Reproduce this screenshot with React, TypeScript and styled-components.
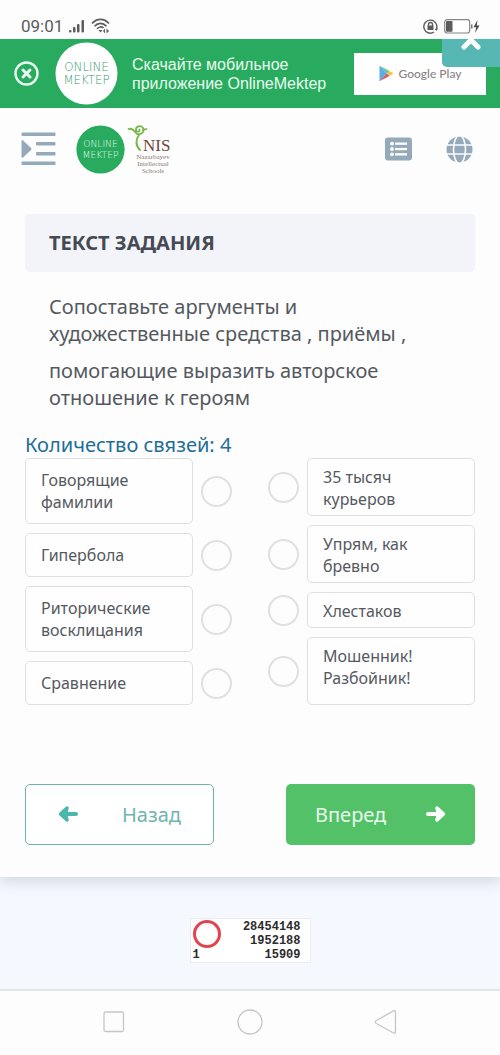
import React from 'react';
import styled, { createGlobalStyle } from 'styled-components';

const GlobalStyle = createGlobalStyle`
  * { box-sizing: border-box; }
  body {
    margin: 0;
    background: #f5f8fe;
    color: #55595f;
    font-family: "Noto Sans", "Open Sans", sans-serif;
  }
  button { font: inherit; cursor: pointer; }
  p, h1, h2 { margin: 0; }
  svg { display: block; }
`;

const Screen = styled.div`
  display: flex;
  flex-direction: column;
  min-height: 100vh;
`;

const StatusBar = styled.div`
  display: flex;
  align-items: flex-end;
  justify-content: space-between;
  height: 39px;
  padding: 0 20px 3px 21px;
  background: #fdfdfd;
  color: #5c5c5c;
`;

const StatusGroup = styled.div`
  display: flex;
  align-items: center;
  gap: 6px;
  height: 20px;
`;

const Clock = styled.time`
  font: 400 17px/20px Roboto, sans-serif;
`;

const Banner = styled.section`
  position: relative;
  display: flex;
  align-items: center;
  height: 69px;
  padding: 0 14px;
  overflow: hidden;
  background: #28ab5e;
  color: #e9fbf0;
`;

const PlainButton = styled.button`
  display: flex;
  padding: 0;
  border: 0;
  background: none;
  color: inherit;
`;

const BannerLogo = styled.div`
  margin-left: 16px;
`;

const BannerText = styled.p`
  flex: 1;
  margin-left: 14px;
  font: 400 16px/19px "Liberation Sans", Arial, sans-serif;
`;

const StoreLink = styled.a`
  display: flex;
  align-items: center;
  justify-content: center;
  gap: 5px;
  width: 132px;
  height: 42px;
  background: #fff;
  color: #8b8586;
  font: 500 12px/16px Lato, sans-serif;
  text-decoration: none;
  white-space: nowrap;
`;

const CornerClose = styled.button`
  position: absolute;
  top: 0;
  right: 0;
  display: flex;
  justify-content: center;
  width: 58px;
  height: 28px;
  padding: 0;
  border: 0;
  border-radius: 0 0 0 5px;
  background: #57b8b3;
  color: #fff;
`;

const Card = styled.main`
  background: #fdfdfd;
  box-shadow: 0 4px 14px rgba(60, 70, 80, 0.2);
`;

const Header = styled.header`
  display: flex;
  align-items: center;
  height: 82px;
  padding: 0 27px 0 21px;
  color: #94a9b9;
`;

const Logos = styled.div`
  display: flex;
  flex: 1;
  align-items: center;
  gap: 2px;
  margin-left: 20px;
`;

const HeaderActions = styled.div`
  display: flex;
  align-items: center;
  gap: 34px;
`;

const Content = styled.div`
  padding: 24px 25px 32px;
`;

const TaskTitle = styled.h1`
  padding: 15px 24px;
  border-radius: 5px;
  background: #f3f4f9;
  color: #454a53;
  font-size: 20px;
  font-weight: 700;
  line-height: 28px;
`;

const TaskText = styled.div`
  display: flex;
  flex-direction: column;
  gap: 10px;
  padding: 21px 24px 20px;
  font-size: 20px;
  line-height: 27px;
`;

const LinkCount = styled.h2`
  color: #1e6e96;
  font-size: 20px;
  font-weight: 400;
  line-height: 27px;
`;

const MatchBoard = styled.div`
  display: grid;
  grid-template-columns: 1fr 1fr;
  gap: 36px;
`;

const MatchColumn = styled.div`
  display: flex;
  flex-direction: column;
  gap: 9px;
`;

const MatchRow = styled.div<{ $side: 'left' | 'right' }>`
  display: flex;
  flex-direction: ${(p) => (p.$side === 'left' ? 'row' : 'row-reverse')};
  align-items: stretch;
  gap: 8px;

  &:last-child { flex: 1; }
`;

const MatchCard = styled.div<{ $side: 'left' | 'right' }>`
  flex: 1;
  padding: ${(p) => (p.$side === 'left' ? '10px 15px' : '7px 15px 5px')};
  border: 1px solid #dedfe0;
  border-radius: 5px;
  background: #fefefe;
  font-size: 16px;
  line-height: 22px;
`;

const Connector = styled.button`
  align-self: center;
  width: 31px;
  height: 31px;
  padding: 0;
  border: 2px solid #dfe1e1;
  border-radius: 50%;
  background: #fdfdfd;
`;

const Pager = styled.nav`
  display: flex;
  justify-content: space-between;
  gap: 24px;
  margin-top: 79px;
`;

const PagerButton = styled.button<{ $primary?: boolean }>`
  display: flex;
  align-items: center;
  justify-content: space-between;
  width: 42%;
  height: 61px;
  padding: 0 ${(p) => (p.$primary ? '29px' : '32px')};
  border: ${(p) => (p.$primary ? '0' : '1px solid #6bb5aa')};
  border-radius: 5px;
  background: ${(p) => (p.$primary ? '#52c168' : '#fff')};
  color: ${(p) => (p.$primary ? '#e9fbed' : '#70b5ad')};
  font-size: 20px;
  line-height: 27px;
`;

const Footer = styled.footer`
  display: flex;
  flex: 1;
  justify-content: center;
  align-items: flex-start;
  padding: 41px 0 25px;
`;

const Counter = styled.div`
  display: flex;
  justify-content: space-between;
  width: 121px;
  padding: 1px 9px 0 2px;
  border: 1px solid #ececf0;
  background: #fff;
  color: #2b2b2b;
  font: 700 12px/14px "Liberation Mono", monospace;
`;

const CounterMark = styled.div`
  display: flex;
  flex-direction: column;
`;

const CounterRing = styled.div`
  width: 28px;
  height: 28px;
  border: 3px solid #e14450;
  border-radius: 50%;
`;

const CounterValues = styled.div`
  display: flex;
  flex-direction: column;
  text-align: right;
`;

const SystemNav = styled.nav`
  display: flex;
  align-items: center;
  justify-content: space-between;
  height: 66px;
  padding: 0 102px 2px;
  border-top: 2px solid #e3e6e6;
  background: #fdfdfd;
  color: #c6c6c6;
`;

function OnlineMektepLogo({ size, disc, ink }: { size: number; disc: string; ink: string }) {
  return (
    <svg width={size} height={size} viewBox="0 0 64 64" role="img" aria-label="Online Mektep">
      <circle cx="32" cy="32" r="31.5" fill={disc} />
      <g fill={ink} fontFamily="DejaVu Sans, sans-serif" fontSize="12" fontWeight="200" textAnchor="middle">
        <text x="32" y="29">ONLINE</text>
        <text x="32" y="43">MEKTEP</text>
      </g>
    </svg>
  );
}

function NisLogo() {
  return (
    <svg width="46" height="50" viewBox="0 0 46 50" role="img" aria-label="NIS">
      <g fill="none" stroke="#79b84a" strokeLinecap="round" strokeWidth="2">
        <path d="M13 26 C8 21 9 15 12 11" />
        <path d="M1.500 5 C5 4 7 6 10 10 C14 11 18 8 16 4 C14 1 8.500 2 9 6 C9.500 8.500 13.500 8 12.500 5.500" strokeWidth="1.800" />
        <path d="M16 6 C17 5.500 18 5.500 19.500 5" strokeWidth="1.800" />
      </g>
      <text x="16" y="27" fill="#70463c" fontFamily="Liberation Serif, serif" fontSize="17">NIS</text>
      <g fill="#8b7b78" fontFamily="Liberation Serif, serif" fontSize="7" textAnchor="middle">
        <text x="26" y="35">Nazarbayev</text>
        <text x="26" y="42">Intellectual</text>
        <text x="26" y="49">Schools</text>
      </g>
    </svg>
  );
}

function SignalIcon() {
  return (
    <svg width="16" height="14" viewBox="0 0 16 14" fill="currentColor">
      <rect x="0" y="11" width="2.500" height="2.500" rx="1" />
      <rect x="4" y="8" width="2.500" height="5.500" rx="1" />
      <rect x="8" y="5" width="2.500" height="8.500" rx="1" />
      <rect x="12.500" y="1" width="2.500" height="12.500" rx="1" />
    </svg>
  );
}

function WifiIcon() {
  return (
    <svg width="19" height="16" viewBox="0 0 19 16" fill="none" stroke="currentColor" strokeWidth="1.700">
      <path d="M1 5.500 C6 0 13 0 18 5.500" />
      <path d="M3.500 8.200 C7 4.300 12 4.300 15.500 8.200" />
      <path d="M6 10.800 C8 8.500 11 8.500 12.500 10" />
      <path d="M7.500 12 h4 l-2 2.500z M12 13 l2-2.500 v5z M15.500 10.500 l2.500 2.500 -2.500 2.500z" fill="currentColor" stroke="none" />
    </svg>
  );
}

function RotationLockIcon() {
  return (
    <svg width="15" height="15" viewBox="0 0 15 15" fill="none" stroke="currentColor" strokeWidth="1.400">
      <path d="M11 13 A6.500 6.500 0 1 1 13.300 10.200" />
      <path d="M5.500 7 V5.500 a2 2 0 0 1 4 0 V7" />
      <rect x="4.500" y="6.500" width="6" height="4.500" rx="0.500" fill="currentColor" stroke="none" />
      <path d="M14.800 9 l-1 3 -2-1.800z" fill="currentColor" stroke="none" />
    </svg>
  );
}

function BatteryIcon() {
  return (
    <svg width="36" height="15" viewBox="0 0 36 15">
      <rect x="0.700" y="0.700" width="25" height="13.300" rx="2.500" fill="#fff" stroke="#858585" strokeWidth="1.200" />
      <rect x="2" y="2" width="6.500" height="10.700" rx="1" fill="#5c5c5c" />
      <rect x="27" y="5.500" width="1.500" height="4" fill="#777" />
      <path d="M33.500 1 L29.500 8.300 h2.700 L31 14 l4.500-7.500 h-2.700z" fill="#4c4c4c" />
    </svg>
  );
}

function CircleCloseIcon() {
  return (
    <svg width="25" height="25" viewBox="0 0 25 25" fill="none" stroke="currentColor" strokeLinecap="round">
      <circle cx="12.500" cy="12.500" r="11" strokeWidth="2.400" />
      <path d="M9 9 l7 7 M16 9 l-7 7" strokeWidth="3" />
    </svg>
  );
}

function PlayLogo() {
  return (
    <svg width="15" height="17" viewBox="0 0 15 17">
      <path d="M0.500 0.800 V16.200 L8 8.500z" fill="#5aaee2" />
      <path d="M0.500 0.800 L8 8.500 L10.500 6z" fill="#64c69c" />
      <path d="M0.500 16.200 L8 8.500 L10.500 11z" fill="#e75259" />
      <path d="M10.500 6 L8 8.500 L10.500 11 L14.500 8.500z" fill="#f5c33d" />
    </svg>
  );
}

function MenuIcon() {
  return (
    <svg width="35" height="34" viewBox="0 0 35 34" fill="currentColor">
      <rect x="0.500" y="0.500" width="34" height="3.500" rx="1" />
      <rect x="15" y="10" width="19.500" height="3.500" rx="1" />
      <rect x="15" y="20" width="19.500" height="3.500" rx="1" />
      <rect x="0.500" y="29.500" width="34" height="3.500" rx="1" />
      <path d="M0.500 9 Q0.500 7.500 2 8.500 L10 16 Q11 17 10 18 L2 25.500 Q0.500 26 0.500 24.500z" />
    </svg>
  );
}

function ListIcon() {
  return (
    <svg width="27" height="24" viewBox="0 0 27 24">
      <rect x="0" y="0.500" width="27" height="23" rx="3" fill="currentColor" />
      <g fill="#fff">
        <circle cx="7" cy="6.700" r="1.900" />
        <circle cx="7" cy="12" r="1.900" />
        <circle cx="7" cy="17.300" r="1.900" />
        <rect x="10" y="5.500" width="12" height="2.300" />
        <rect x="10" y="10.900" width="12" height="2.300" />
        <rect x="10" y="16.200" width="12" height="2.300" />
      </g>
    </svg>
  );
}

function GlobeIcon() {
  return (
    <svg width="27" height="27" viewBox="0 0 27 27">
      <circle cx="13.500" cy="13.500" r="13" fill="currentColor" />
      <g fill="none" stroke="#fdfdfd" strokeWidth="1.600">
        <ellipse cx="13.500" cy="13.500" rx="6" ry="14" />
        <path d="M0 9 H27 M0 18 H27" />
      </g>
    </svg>
  );
}

function ArrowIcon({ direction }: { direction: 'left' | 'right' }) {
  const left = direction === 'left';
  const color = left ? '#4db6ac' : '#fff';
  return (
    <svg width="20" height="20" viewBox="0 0 20 20" fill={color} stroke={color} strokeLinecap="round" strokeLinejoin="round" strokeWidth="4">
      <path d={left ? 'M18 9 H4' : 'M2 9 H16'} />
      <path d={left ? 'M9 3 L2.500 9 L9 15 L7.500 9z' : 'M11 3 L17.500 9 L11 15 L12.500 9z'} strokeWidth="3.500" />
    </svg>
  );
}

const leftItems = ['Говорящие фамилии', 'Гипербола', 'Риторические восклицания', 'Сравнение'];
const rightItems = ['35 тысяч курьеров', 'Упрям, как бревно', 'Хлестаков', 'Мошенник! Разбойник!'];

function MatchList({ side, items }: { side: 'left' | 'right'; items: string[] }) {
  return (
    <MatchColumn>
      {items.map((item) => (
        <MatchRow key={item} $side={side}>
          <MatchCard $side={side}>{item}</MatchCard>
          <Connector type="button" aria-label={item} />
        </MatchRow>
      ))}
    </MatchColumn>
  );
}

export default function App() {
  return (
    <Screen>
      <GlobalStyle />
      <StatusBar>
        <StatusGroup>
          <Clock>09:01</Clock>
          <SignalIcon />
          <WifiIcon />
        </StatusGroup>
        <StatusGroup>
          <RotationLockIcon />
          <BatteryIcon />
        </StatusGroup>
      </StatusBar>

      <Banner>
        <PlainButton type="button" aria-label="Закрыть баннер"><CircleCloseIcon /></PlainButton>
        <BannerLogo><OnlineMektepLogo size={63} disc="#fff" ink="#3b9a70" /></BannerLogo>
        <BannerText>Скачайте мобильное<br />приложение OnlineMektep</BannerText>
        <StoreLink href="#google-play"><PlayLogo />Google Play</StoreLink>
        <CornerClose type="button" aria-label="Закрыть">
          <svg width="22" height="12" viewBox="0 0 22 12" fill="none" stroke="currentColor" strokeLinecap="round" strokeWidth="5">
            <path d="M4 8 L11 1 L18 8" />
          </svg>
        </CornerClose>
      </Banner>

      <Card>
        <Header>
          <PlainButton type="button" aria-label="Меню"><MenuIcon /></PlainButton>
          <Logos>
            <OnlineMektepLogo size={49} disc="#28ab5e" ink="#e4faee" />
            <NisLogo />
          </Logos>
          <HeaderActions>
            <PlainButton type="button" aria-label="Список"><ListIcon /></PlainButton>
            <PlainButton type="button" aria-label="Язык"><GlobeIcon /></PlainButton>
          </HeaderActions>
        </Header>

        <Content>
          <TaskTitle>ТЕКСТ ЗАДАНИЯ</TaskTitle>
          <TaskText>
            <p>Сопоставьте аргументы и художественные средства , приёмы ,</p>
            <p>помогающие выразить авторское отношение к героям</p>
          </TaskText>
          <LinkCount>Количество связей: 4</LinkCount>
          <MatchBoard>
            <MatchList side="left" items={leftItems} />
            <MatchList side="right" items={rightItems} />
          </MatchBoard>
          <Pager>
            <PagerButton type="button"><ArrowIcon direction="left" />Назад</PagerButton>
            <PagerButton type="button" $primary>Вперед<ArrowIcon direction="right" /></PagerButton>
          </Pager>
        </Content>
      </Card>

      <Footer>
        <Counter>
          <CounterMark>
            <CounterRing />
            <span>1</span>
          </CounterMark>
          <CounterValues>
            <span>28454148</span>
            <span>1952188</span>
            <span>15909</span>
          </CounterValues>
        </Counter>
      </Footer>

      <SystemNav>
        <PlainButton type="button" aria-label="Недавние">
          <svg width="24" height="24" viewBox="0 0 24 24" fill="none" stroke="currentColor" strokeWidth="1.300">
            <rect x="2" y="2" width="19.500" height="19.500" rx="1.500" />
          </svg>
        </PlainButton>
        <PlainButton type="button" aria-label="Домой">
          <svg width="26" height="26" viewBox="0 0 26 26" fill="none" stroke="currentColor" strokeWidth="1.300">
            <circle cx="13" cy="13" r="12" />
          </svg>
        </PlainButton>
        <PlainButton type="button" aria-label="Назад">
          <svg width="24" height="24" viewBox="0 0 24 24" fill="none" stroke="currentColor" strokeLinejoin="round" strokeWidth="1.300">
            <path d="M2 10.800 L19.500 0.900 Q21.500 0.300 21.500 2 V22 Q21.500 23.700 19.500 23 L2 13.200 Q0.300 12 2 10.800z" />
          </svg>
        </PlainButton>
      </SystemNav>
    </Screen>
  );
}
